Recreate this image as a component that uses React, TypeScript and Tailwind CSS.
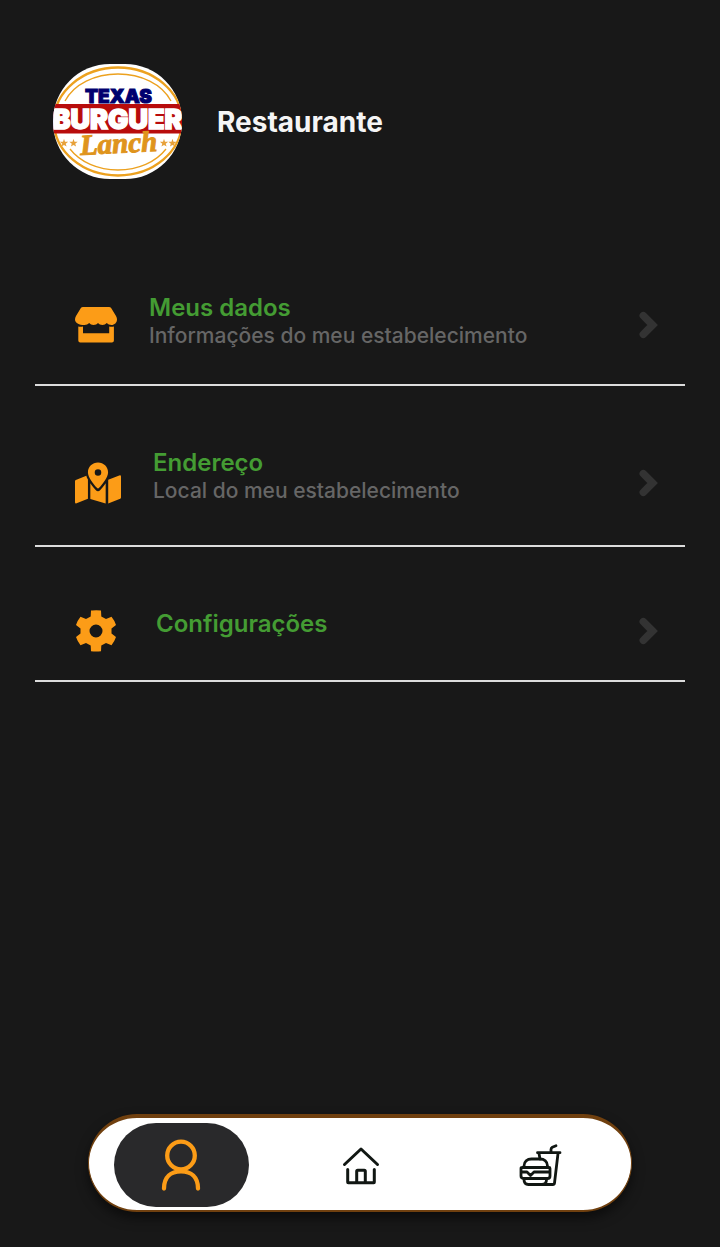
import type { ReactNode } from "react";

function Logo() {
  return (
    <svg viewBox="0 0 129 115" className="h-[115px] w-[129px] shrink-0 rounded-[57px] bg-white" role="img" aria-label="Texas Burguer Lanch">
      <g fill="none" stroke="#eca11f">
        <ellipse cx="65" cy="57.500" rx="64" ry="54" strokeWidth="2.400" />
        <path d="M12 37C21 20 42 10 65 10s44 10 53 27M17 85c10 13 28 21 48 21s38-8 48-21" strokeWidth="1.300" />
      </g>
      <rect y="40" width="129" height="29.500" fill="#b80c0c" />
      <rect x="31" y="26" width="70" height="14" fill="#fff" />
      <text x="65.500" y="38.500" textAnchor="middle" fontFamily="Inter, sans-serif" fontSize="19" fontWeight="900" fill="#00006f" stroke="#00006f" strokeWidth="1">TEXAS</text>
      <text x="64.500" y="64.500" textAnchor="middle" fontFamily="Inter, sans-serif" fontSize="27" fontWeight="900" fill="#fff" stroke="#fff" strokeWidth="1.500">BURGUER</text>
      <text x="66" y="89" transform="rotate(-3 65 88)" textAnchor="middle" fontFamily="Liberation Serif, serif" fontSize="29" fontWeight="700" fontStyle="italic" fill="#df941c" stroke="#df941c" strokeWidth="1">Lanch</text>
      <g fill="#e7a13a">
        {[11, 20.5, 111, 119.5].map((x) => (
          <path key={x} transform={`translate(${x} 79)`} d="M0-4.200 1-1.200 4.200-1.200 1.700.700 2.600 3.600 0 1.900-2.600 3.600-1.700.700-4.200-1.200-1-1.200Z" />
        ))}
      </g>
    </svg>
  );
}

function StoreIcon() {
  return (
    <svg viewBox="0 0 42 36" className="h-9 w-[42px] shrink-0" fill="#fc9c17" aria-hidden="true">
      <path d="M8 0h26q1.500 0 2.300 1.300L41 9q1 1.500 1 3.500c0 3-2.500 5.500-5.500 5.500-2 0-3.700-1-4.700-2-1.200 1.200-2.700 2-4.300 2-2 0-3.500-1-4.500-2-1 1-2.500 2-4.500 2-1.800 0-3.300-1-4.300-2-1.200 1.200-2.900 2-4.700 2C4 18 0 16 0 12.500Q0 10.500 1 9l4.700-7.700Q6.500 0 8 0Z" />
      <path d="M3.300 19.500q2.300.600 4.700 0V26.300h26.200v-6.800q2.300.600 4.700 0V33.500q0 2-2 2H5.300q-2 0-2-2Z" />
    </svg>
  );
}

function MapIcon() {
  return (
    <svg viewBox="0 0 576 512" className="h-[42px] w-[46px] shrink-0" fill="#fc9c17" aria-hidden="true">
      <path fillRule="evenodd" d="M288 0c70 0 126 54 126 124 0 56-63 136-112 193q-14 16-28 0C225 260 162 180 162 124 162 54 218 0 288 0Zm0 84a41 41 0 1 0 0 82 41 41 0 0 0 0-82Z" />
      <path d="M10 217 142 164q5 24 20 49v241L20 511Q0 516 0 496V232q0-11 10-15ZM192 260c24 34 45 59 67 84q29 31 58 0c22-25 43-50 67-84v252L192 455ZM416 216l138-55q22-7 22 14v264q0 11-10 15l-150 58Z" />
    </svg>
  );
}

function GearIcon() {
  return (
    <svg viewBox="0 0 49 42" className="h-[42px] w-[49px] shrink-0" fill="#fc9c17" aria-hidden="true">
      <path fillRule="evenodd" d="M17 .500Q21 0 26 .500L26.300 6.500 31 9 36.500 6.800Q39.500 10.500 41 15L36.500 18.500v5l4.500 3.500Q39.500 31.500 36.500 35.200L31 33l-4.700 2.500-.300 5.700Q21 41.800 16 41.200L15.700 35.500 11 33 5.500 35.200Q2.500 31.500 1 27L5.500 23.500v-5L1 15Q2.500 10.500 5.500 6.800L11 9l4.700-2.500L16 .500ZM21 14.500a6.500 6.500 0 1 0 0 13 6.500 6.500 0 0 0 0-13Z" />
    </svg>
  );
}

function Chevron() {
  return (
    <svg viewBox="0 0 20 28" className="ml-auto h-7 w-5 shrink-0" fill="none" stroke="#333" strokeWidth="7.500" strokeLinecap="round" strokeLinejoin="miter" aria-hidden="true">
      <path d="M4.300 4.700 13.600 14 4.300 23.300" />
    </svg>
  );
}

function Row({ icon, title, detail, textClass }: { icon: ReactNode; title: string; detail?: string; textClass: string }) {
  return (
    <li className="border-b-2 border-[#dcdcdc]">
      <a href="#" className="flex items-center gap-8 pt-[63px] pr-[26px] pb-7 pl-10">
        {icon}
        <span className={textClass}>
          <span className="block text-[24px] leading-7 font-semibold text-[#449c33]">{title}</span>
          {detail && <span className="block text-[21px] leading-7 font-medium text-[#666]">{detail}</span>}
        </span>
        <Chevron />
      </a>
    </li>
  );
}

export default function App() {
  return (
    <div className="flex min-h-screen flex-col bg-[#181818] font-[Inter,sans-serif]">
      <header className="flex items-center gap-[35px] px-[53px] pt-16">
        <Logo />
        <h1 className="text-[28px] leading-8 font-bold text-[#f5f5f5]">Restaurante</h1>
      </header>
      <main className="px-[35px] pt-[52px] pb-10">
        <ul>
          <Row icon={<StoreIcon />} title="Meus dados" detail="Informações do meu estabelecimento" textClass="pb-1.5" />
          <Row icon={<MapIcon />} title="Endereço" detail="Local do meu estabelecimento" textClass="pb-3" />
          <Row icon={<GearIcon />} title="Configurações" textClass="pb-3.5" />
        </ul>
      </main>
      <nav aria-label="Principal" className="mx-[88px] mt-auto mb-[35px] flex h-[98px] items-center rounded-[49px] border-x border-t-4 border-b-2 border-[#70400f] bg-white pt-0.5 pl-0.5 shadow-[0_6px_12px_rgba(0,0,0,0.5)]">
        <a href="#" aria-label="Perfil" aria-current="page" className="flex flex-1 justify-center">
          <span className="flex h-[84px] w-[135px] items-center justify-center rounded-[42px] bg-[#29292b]">
            <svg viewBox="0 0 40 52" className="h-[52px] w-10" fill="none" stroke="#fc9c17" strokeWidth="4.300" strokeLinecap="round" aria-hidden="true">
              <circle cx="20" cy="16.500" r="13.800" />
              <path d="M3 49.500C3 38 10 32.300 20 32.300S37 38 37 49.500" />
            </svg>
          </span>
        </a>
        <a href="#" aria-label="Início" className="flex flex-1 justify-center">
          <svg viewBox="0 0 40 40" className="size-10" fill="none" stroke="#111713" strokeWidth="3" strokeLinecap="round" strokeLinejoin="round" aria-hidden="true">
            <path d="M3.500 19.500 20 4l16.500 15.500M6.700 24.500v12.800q0 .500.500.500h25.600q.500 0 .500-.500V24.500M15.700 37.500V26.200q0-1 1-1h6.600q1 0 1 1v11.300" />
          </svg>
        </a>
        <a href="#" aria-label="Cardápio" className="flex flex-1 justify-center">
          <svg viewBox="0 0 44 44" className="size-11" fill="none" stroke="#111713" strokeWidth="2.800" strokeLinecap="round" strokeLinejoin="round" aria-hidden="true">
            <path d="M18.500 9.700H41M32 9V6.500q0-1.500 1.300-2.200L37 2.800M39 10.500 35.500 40q-.200 1.500-1.700 1.500H10M20 10.500l1 5.500" />
            <path d="M5 24v-1c0-4.500 3.300-7 7.500-7H21c4.200 0 7.500 2.500 7.500 7v1M3.500 24.500h26.500q1 0 1 1V33q0 2.500-2.500 2.500H4.500Q2 35.500 2 33v-7.500q0-1 1.500-1ZM2 29h6l3.500 3.500L15 29h16M5 36v.500q0 5 4.500 5h13.500q4.500 0 4.500-5V36" />
          </svg>
        </a>
      </nav>
    </div>
  );
}
